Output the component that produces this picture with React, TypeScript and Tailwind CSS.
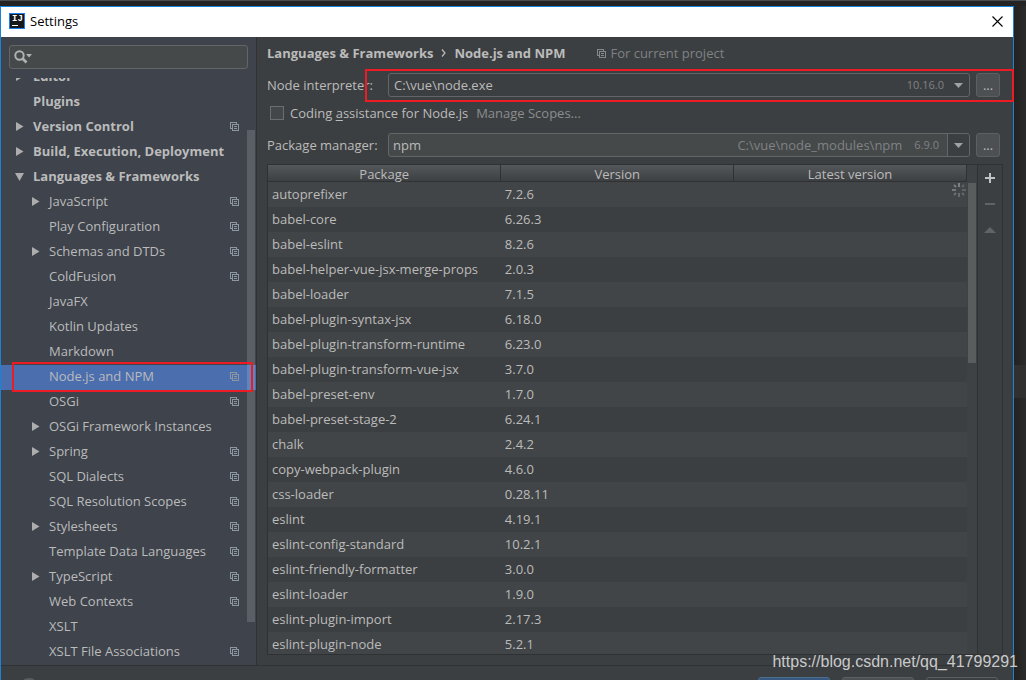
import clsx from "clsx";

type TreeItem = {
  label: string;
  level: 0 | 1;
  arrow?: "right" | "down";
  project?: boolean;
  selected?: boolean;
};

const tree: TreeItem[] = [
  { label: "Editor", level: 0, arrow: "right" },
  { label: "Plugins", level: 0 },
  { label: "Version Control", level: 0, arrow: "right", project: true },
  { label: "Build, Execution, Deployment", level: 0, arrow: "right" },
  { label: "Languages & Frameworks", level: 0, arrow: "down" },
  { label: "JavaScript", level: 1, arrow: "right", project: true },
  { label: "Play Configuration", level: 1, project: true },
  { label: "Schemas and DTDs", level: 1, arrow: "right", project: true },
  { label: "ColdFusion", level: 1, project: true },
  { label: "JavaFX", level: 1 },
  { label: "Kotlin Updates", level: 1 },
  { label: "Markdown", level: 1 },
  { label: "Node.js and NPM", level: 1, project: true, selected: true },
  { label: "OSGi", level: 1, project: true },
  { label: "OSGi Framework Instances", level: 1, arrow: "right" },
  { label: "Spring", level: 1, arrow: "right", project: true },
  { label: "SQL Dialects", level: 1, project: true },
  { label: "SQL Resolution Scopes", level: 1, project: true },
  { label: "Stylesheets", level: 1, arrow: "right", project: true },
  { label: "Template Data Languages", level: 1, project: true },
  { label: "TypeScript", level: 1, arrow: "right", project: true },
  { label: "Web Contexts", level: 1, project: true },
  { label: "XSLT", level: 1 },
  { label: "XSLT File Associations", level: 1, project: true },
];

const packages = [
  ["autoprefixer", "7.2.6"],
  ["babel-core", "6.26.3"],
  ["babel-eslint", "8.2.6"],
  ["babel-helper-vue-jsx-merge-props", "2.0.3"],
  ["babel-loader", "7.1.5"],
  ["babel-plugin-syntax-jsx", "6.18.0"],
  ["babel-plugin-transform-runtime", "6.23.0"],
  ["babel-plugin-transform-vue-jsx", "3.7.0"],
  ["babel-preset-env", "1.7.0"],
  ["babel-preset-stage-2", "6.24.1"],
  ["chalk", "2.4.2"],
  ["copy-webpack-plugin", "4.6.0"],
  ["css-loader", "0.28.11"],
  ["eslint", "4.19.1"],
  ["eslint-config-standard", "10.2.1"],
  ["eslint-friendly-formatter", "3.0.0"],
  ["eslint-loader", "1.9.0"],
  ["eslint-plugin-import", "2.17.3"],
  ["eslint-plugin-node", "5.2.1"],
];

function ProjectIcon({ className }: { className?: string }) {
  return (
    <svg width="9" height="9" viewBox="0 0 9 9" fill="none" stroke="currentColor" shapeRendering="crispEdges" className={clsx("shrink-0", className)}>
      <path d="M2 6.5H0.5V0.5H6.5V2" />
      <path d="M2.5 2.5H8.5V8.5H2.5Z" />
      <path d="M4 4.5H7M4 6.5H7" />
    </svg>
  );
}

function TreeArrow({ direction }: { direction: "right" | "down" }) {
  return (
    <svg width="9" height="9" viewBox="0 0 9 9" fill="#adadad">
      {direction === "right" ? <path d="M1 0L8.5 4.5L1 9Z" /> : <path d="M0 1H9L4.5 9Z" />}
    </svg>
  );
}

function DownArrow() {
  return (
    <svg width="9" height="5" viewBox="0 0 9 5" fill="#9fa1a3">
      <path d="M0 0H9L4.5 5Z" />
    </svg>
  );
}

function Spinner() {
  return (
    <svg width="14" height="14" viewBox="0 0 14 14" stroke="#7d8184" strokeWidth="2">
      <path d="M7 0V4" />
      <path d="M10 4L12 2" opacity="0.5" />
      <path d="M10 7H14" opacity="0.5" />
      <path d="M10 10L12 12" opacity="0.6" />
      <path d="M7 10V14" opacity="0.65" />
      <path d="M4 10L2 12" opacity="0.75" />
      <path d="M4 7H0" opacity="0.85" />
      <path d="M4 4L2 2" opacity="0.95" />
    </svg>
  );
}

function TitleBar() {
  return (
    <header className="flex h-[30px] shrink-0 items-center bg-white pb-0.5 pl-2 pr-2.5 text-black">
      <div className="flex size-4 flex-col border border-[#1a7df0] bg-[#16181c] pt-px pl-0.5">
        <span className="font-['Liberation_Mono','DejaVu_Sans_Mono',monospace] text-[9px] leading-[9px] font-bold text-white">IJ</span>
        <span className="mt-px h-px w-1.5 bg-white" />
      </div>
      <h1 className="ml-[5px] flex-1">Settings</h1>
      <button type="button" aria-label="Close">
        <svg width="11" height="11" viewBox="0 0 11 11" stroke="#000" strokeWidth="1.1">
          <path d="M0.5 0.5L10.5 10.5M10.5 0.5L0.5 10.5" />
        </svg>
      </button>
    </header>
  );
}

function TreeRow({ item }: { item: TreeItem }) {
  return (
    <li>
      <button
        type="button"
        className={clsx(
          "flex h-[25px] w-full items-center pr-[17px] pb-0.5 text-left",
          item.level === 0 ? "pl-[14px] font-bold" : "pl-[30px]",
          item.selected && "bg-[#4b6eaf]"
        )}
      >
        <span className="flex w-[18px] shrink-0">{item.arrow && <TreeArrow direction={item.arrow} />}</span>
        <span className="flex-1 pb-0.5 whitespace-nowrap">{item.label}</span>
        {item.project && <ProjectIcon className="text-[#8c979f]" />}
      </button>
    </li>
  );
}

function Sidebar() {
  return (
    <nav className="relative flex w-64 shrink-0 flex-col border-r border-[#323232] bg-[#3e434c]">
      <label className="mx-2 mt-2 flex h-6 shrink-0 items-center rounded-[3px] border border-[#646566] bg-[#45494a] pl-1">
        <svg width="18" height="14" viewBox="0 0 18 14" fill="none" className="shrink-0">
          <circle cx="5.5" cy="5.5" r="4.2" stroke="#afb1b3" strokeWidth="2" />
          <path d="M8.5 8.5L12.5 12.5" stroke="#afb1b3" strokeWidth="2.6" />
          <path d="M12 4H18L15 7.5Z" fill="#afb1b3" />
        </svg>
        <input type="text" aria-label="Search settings" className="min-w-0 flex-1 bg-transparent px-1 outline-none" />
      </label>
      <div className="mt-[9px] min-h-0 flex-1 overflow-hidden">
        <ul className="-mt-[13px]">
          {tree.map((item) => (
            <TreeRow key={item.label} item={item} />
          ))}
        </ul>
      </div>
      <div className="absolute top-[93px] right-px bottom-[43px] w-2 bg-white/15" />
      <div className="absolute top-[325px] right-[3px] left-[11px] z-10 h-[30px] border-2 border-[#ed1c24]" />
    </nav>
  );
}

function MoreButton({ label }: { label: string }) {
  return (
    <button type="button" aria-label={label} className="ml-1.5 h-6 w-6 shrink-0 rounded-[3px] border border-[#5e6060] bg-[#4c5052] leading-5">
      ...
    </button>
  );
}

function PackageTable() {
  return (
    <div className="mt-[7px] mb-2.5 flex min-h-0 flex-1 border border-[#2f3132]">
      <div className="min-w-0 flex-1 overflow-hidden">
        <table className="w-full table-fixed border-collapse">
          <thead>
            <tr className="h-[17px] bg-linear-to-b from-[#54585b] to-[#3c3f41] shadow-[inset_0_-1px_0_#2f3132]">
              {["Package", "Version", "Latest version"].map((name) => (
                <th key={name} className="border-r border-[#2f3132] p-0 text-center leading-4 font-normal">
                  {name}
                </th>
              ))}
            </tr>
          </thead>
          <tbody>
            {packages.map(([name, version]) => (
              <tr key={name} className="h-[25px] odd:bg-[#414547] even:bg-[#3c3f41]">
                <td className="p-0 pb-0.5 pl-1">{name}</td>
                <td className="p-0 pb-0.5 pl-1">{version}</td>
                <td />
              </tr>
            ))}
          </tbody>
        </table>
      </div>
      <div className="relative w-2.5 shrink-0 bg-[#3e4244]">
        <div className="mt-[18px] ml-px h-[180px] w-2 bg-[#595d5e]" />
        <div className="absolute top-[18px] right-[11px]">
          <Spinner />
        </div>
      </div>
      <div className="flex w-[25px] shrink-0 flex-col items-center border-l border-[#2f3132] pt-2">
        <button type="button" aria-label="Add package" className="h-2.5">
          <svg width="10" height="10" viewBox="0 0 10 10" stroke="#c0c2c3" strokeWidth="2">
            <path d="M5 0V10M0 5H10" />
          </svg>
        </button>
        <button type="button" aria-label="Remove package" className="mt-4 h-2.5">
          <svg width="10" height="10" viewBox="0 0 10 10" stroke="#616466" strokeWidth="2">
            <path d="M0 5H10" />
          </svg>
        </button>
        <button type="button" aria-label="Upgrade package" className="mt-4 h-2.5">
          <svg width="12" height="10" viewBox="0 0 12 10" fill="#616466">
            <path d="M0 8L6 2L12 8Z" />
          </svg>
        </button>
      </div>
    </div>
  );
}

function SettingsPanel() {
  return (
    <main className="relative flex min-w-0 flex-1 flex-col px-2.5 pt-1.5">
      <div className="flex h-5 items-center font-bold">
        <span>Languages &amp; Frameworks</span>
        <svg width="5" height="8" viewBox="0 0 5 8" fill="none" stroke="#bbbbbb" strokeWidth="1.2" className="mx-2">
          <path d="M1 0.5L4 4L1 7.5" />
        </svg>
        <span>Node.js and NPM</span>
        <ProjectIcon className="ml-8 text-[#84888a]" />
        <span className="ml-1 font-normal text-[#7f8284]">For current project</span>
      </div>

      <div className="mt-2.5 flex h-6 items-center pr-[3px]">
        <label htmlFor="interpreter" className="w-[121px] shrink-0">
          Node interpreter:
        </label>
        <div className="flex h-6 min-w-0 flex-1 items-center rounded-[3px] border border-[#646566] pr-1.5">
          <select id="interpreter" className="h-full min-w-0 flex-1 appearance-none bg-transparent pl-[5px] outline-none">
            <option>C:\vue\node.exe</option>
          </select>
          <span className="mr-2.5 text-[11px] text-[#808284]">10.16.0</span>
          <DownArrow />
        </div>
        <MoreButton label="Browse interpreters" />
      </div>

      <div className="mt-1 flex h-6 items-center">
        <input id="assistance" type="checkbox" className="ml-[3px] size-3.5 shrink-0 appearance-none border border-[#6b6d6e] bg-[#43474a]" />
        <label htmlFor="assistance" className="ml-1.5">
          Coding <span className="underline underline-offset-2">a</span>ssistance for Node.js
        </label>
        <button type="button" className="ml-2 text-[#8b8d8f]">
          Manage Scopes...
        </button>
      </div>

      <div className="mt-2 flex h-6 items-center pr-[3px]">
        <label htmlFor="manager" className="w-[121px] shrink-0">
          Package manager:
        </label>
        <div className="flex h-6 min-w-0 flex-1 items-center rounded-[3px] border border-[#646566] bg-[#45494a]">
          <input id="manager" type="text" defaultValue="npm" className="min-w-0 flex-1 bg-transparent pl-1 outline-none" />
          <span className="text-[#808284]">C:\vue\node_modules\npm</span>
          <span className="mr-2 ml-3 text-[11px] text-[#808284]">6.9.0</span>
          <button type="button" aria-label="Show package managers" className="flex h-full w-[22px] items-center justify-center rounded-r-[2px] border-l border-[#646566] bg-[#3c3f41]">
            <DownArrow />
          </button>
        </div>
        <MoreButton label="Browse package managers" />
      </div>

      <PackageTable />
      <div className="pointer-events-none absolute top-8 -right-px left-[108px] h-[33px] border-2 border-[#ed1c24]" />
    </main>
  );
}

function Footer() {
  return (
    <footer className="flex h-[15px] shrink-0 items-start justify-end gap-3 overflow-hidden border-t border-[#2f3132] pr-[15px]">
      <button type="button" aria-label="Help" className="mt-3 mr-auto ml-[18px] size-5 rounded-full border-2 border-[#5b5e60]" />
      <button type="button" aria-label="OK" className="mt-[11px] h-6 w-[72px] rounded-[3px] border border-[#4c708c] bg-[#365880]" />
      <button type="button" aria-label="Cancel" className="mt-[11px] h-6 w-[72px] rounded-[3px] border border-[#5e6060] bg-[#4c5052]" />
      <button type="button" aria-label="Apply" className="mt-[11px] h-6 w-[72px] rounded-[3px] border border-[#5e6060] bg-[#3c3f41]" />
    </footer>
  );
}

export default function App() {
  return (
    <div className="relative flex h-screen flex-col overflow-hidden bg-[#272727] font-['Open_Sans','Noto_Sans',sans-serif] text-[13px] leading-5 text-[#bbbbbb]">
      <div className="h-1.5 shrink-0 border-t border-[#4b4e50] bg-[#242424]" />
      <div className="flex min-h-0 flex-1">
        <div className="flex min-w-0 flex-1 flex-col border border-b-0 border-[#1883d7] bg-[#3c3f41]">
          <TitleBar />
          <div className="flex min-h-0 flex-1">
            <Sidebar />
            <SettingsPanel />
          </div>
          <Footer />
        </div>
        <div className="w-3 shrink-0 bg-linear-to-r from-[#222222] to-[#2b2b2b] pt-[359px]">
          <div className="h-[33px] bg-[#303030]" />
        </div>
      </div>
      <div className="absolute right-2 bottom-2 font-['Liberation_Sans',Arial,sans-serif] text-base leading-5 text-[#c9cacb]">
        https://blog.csdn.net/qq_41799291
      </div>
    </div>
  );
}
